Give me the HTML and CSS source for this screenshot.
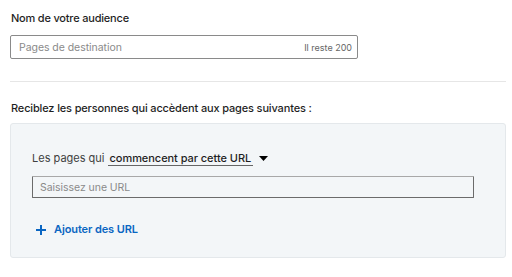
FILE: index.html
```html
<!DOCTYPE html>
<html lang="fr">
<head>
<meta charset="utf-8">
<link rel="stylesheet" href="styles.css">
</head>
<body>
<div class="page">
  <div class="field">
    <label class="label">Nom de votre audience</label>
    <div class="name-input">
      <span class="placeholder">Pages de destination</span>
      <span class="counter">Il reste 200</span>
    </div>
  </div>
  <hr class="divider">
  <div class="section-title">Reciblez les personnes qui accèdent aux pages suivantes :</div>
  <div class="panel">
    <div class="rule-row">
      <span class="rule-text">Les pages qui</span>
      <span class="rule-select">commencent par cette URL</span>
      <svg class="caret" width="9" height="5" viewBox="0 0 9 5"><path d="M0 0h9L4.5 5z" fill="#000"/></svg>
    </div>
    <div class="url-input"><span class="placeholder">Saisissez une URL</span></div>
    <div class="add-url">
      <svg class="plus" width="10" height="10" viewBox="0 0 10 10"><path d="M4 0h2v4h4v2H6v4H4V6H0V4h4z" fill="#0a66c2"/></svg>
      <span>Ajouter des URL</span>
    </div>
  </div>
</div>
</body>
</html>
```
FILE: styles.css
```css
* { box-sizing: border-box; }
html, body { margin: 0; padding: 0; background: #fff; }
body {
  font-family: Inter, "Liberation Sans", sans-serif;
  color: #000000e6;
  font-size: 11px;
  line-height: 15px;
}
.page {
  width: 496px;
  margin-left: 10px;
  padding-top: 11px;
}
.field { display: flex; flex-direction: column; }
.label {
  font-weight: 500;
  color: #1f1f1f;
  padding-left: 1px;
  margin-bottom: 9px;
  letter-spacing: -0.2px;
}
.name-input {
  width: 348px;
  height: 24px;
  border: 1px solid #8a8a8a;
  border-radius: 2px;
  display: flex;
  align-items: center;
  justify-content: space-between;
  padding: 0 5px 0 8px;
}
.placeholder { color: #8a8a8a; font-size: 10.5px; letter-spacing: -0.05px; }
.counter { font-size: 9px; color: #666; }
.divider {
  border: 0;
  border-top: 1px solid #e6e6e6;
  margin: 22px 0 0 0;
}
.section-title {
  font-weight: 500;
  color: #1f1f1f;
  padding-left: 1px;
  margin-top: 19px;
  letter-spacing: -0.15px;
}
.panel {
  margin-top: 7px;
  height: 135px;
  background: #f3f6f8;
  border: 1px solid #e4e8eb;
  border-radius: 3px;
  padding: 26px 0 0 21px;
}
.rule-row { display: flex; align-items: center; height: 16px; }
.rule-text { color: #404040; margin-right: 3px; }
.rule-select {
  font-weight: 500;
  color: #1f1f1f;
  border-bottom: 1px solid #666;
  padding: 0 2px;
  line-height: 14px;
  letter-spacing: -0.05px;
}
.caret { margin-left: 6px; }
.url-input {
  margin-top: 10px;
  width: 442px;
  height: 22px;
  border: 1px solid #6b6b6b;
  border-top-color: #a8a8a8;
  border-radius: 1px;
  display: flex;
  align-items: center;
  padding-left: 7px;
}
.add-url {
  margin-top: 24px;
  display: flex;
  align-items: center;
  padding-left: 4px;
  color: #0a66c2;
  font-weight: 600;
  letter-spacing: -0.1px;
}
.plus { margin-right: 8px; }
```
